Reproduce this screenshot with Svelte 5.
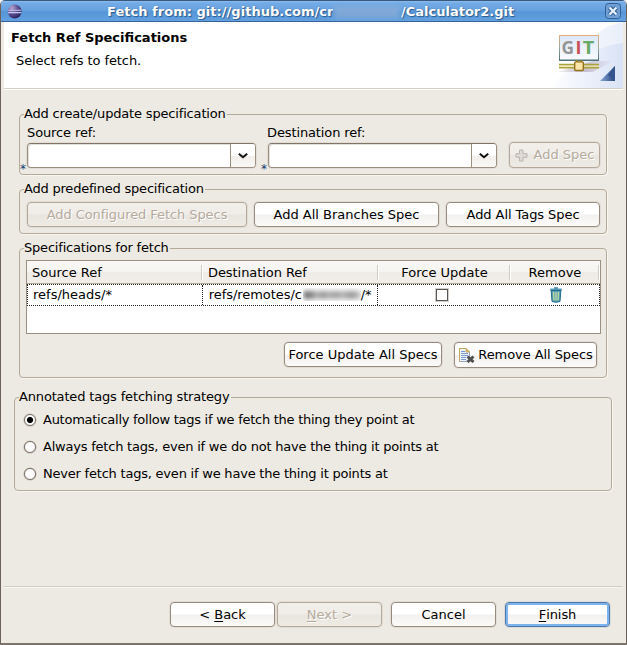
<script>
  let selected = $state(0);
  const strategies = [
    { text: 'Automatically follow tags if we fetch the thing they point at', spacing: -0.26 },
    { text: 'Always fetch tags, even if we do not have the thing it points at', spacing: -0.215 },
    { text: 'Never fetch tags, even if we have the thing it points at', spacing: -0.214 }
  ];
</script>

{#snippet combo(label)}
  <div class="field">
    <div class="label">{label}</div>
    <div class="combo">
      <span class="star">*</span>
      <div class="entry"></div>
      <div class="arrow">
        <svg width="10" height="6" viewBox="0 0 10 6"><path d="M.8 .8 L5 4.3 L9.2 .8" fill="none" stroke="#111" stroke-width="2" /></svg>
      </div>
    </div>
  </div>
{/snippet}

<div class="window">
  <div class="titlebar">
    <svg class="logo" width="15" height="15" viewBox="0 0 15 15">
      <defs>
        <radialGradient id="orb" cx=".3" cy=".25" r=".85">
          <stop offset="0" stop-color="#b9a6cf" /><stop offset=".45" stop-color="#66559b" /><stop offset="1" stop-color="#211b55" />
        </radialGradient>
      </defs>
      <circle cx="7.7" cy="7.5" r="6.9" fill="url(#orb)" />
      <path d="M1.2 6.2H14.2M1 8.6H14.4" stroke="#c3c9ef" stroke-width="1.1" />
    </svg>
    <div class="title"><span class="t1">Fetch from: git://github.com/cr</span><span class="smudge"></span><span>/Calculator2.git</span></div>
    <div class="close">
      <svg width="16" height="16" viewBox="0 0 16 16">
        <rect x=".5" y=".5" width="15" height="15" rx="3" fill="#6f9fd4" stroke="#315f94" />
        <path d="M4.5 4.5L11.5 11.5M11.5 4.5L4.5 11.5" stroke="#2f5f96" stroke-width="4.4" />
        <path d="M4.5 4.5L11.5 11.5M11.5 4.5L4.5 11.5" stroke="#e8f1fb" stroke-width="2.3" />
      </svg>
    </div>
  </div>

  <div class="header">
    <div class="heads">
      <div class="h1">Fetch Ref Specifications</div>
      <div class="h2">Select refs to fetch.</div>
    </div>
    <svg class="banner" width="75" height="66" viewBox="0 0 75 66">
      <defs>
        <linearGradient id="sky" x1="0" x2="1"><stop offset="0" stop-color="#fff" /><stop offset="1" stop-color="#d9e2f6" /></linearGradient>
        <linearGradient id="sky2" x1="0" x2="1"><stop offset="0" stop-color="#fff" /><stop offset="1" stop-color="#e9effa" /></linearGradient>
        <linearGradient id="frame" x2="0" y2="1"><stop offset="0" stop-color="#e4ae82" /><stop offset=".5" stop-color="#99a7a1" /><stop offset="1" stop-color="#4f7377" /></linearGradient>
        <linearGradient id="screen" x2="0" y2="1"><stop offset="0" stop-color="#dce8f6" /><stop offset="1" stop-color="#fafcfe" /></linearGradient>
        <linearGradient id="tri"><stop offset="0" stop-color="#85a8d8" /><stop offset="1" stop-color="#27457f" /></linearGradient>
        <linearGradient id="shade"><stop offset="0" stop-color="#b6a9bd" stop-opacity=".2" /><stop offset=".5" stop-color="#ad9db5" stop-opacity=".6" /><stop offset="1" stop-color="#b6a9bd" stop-opacity="0" /></linearGradient>
      </defs>
      <path d="M35 28 Q48 5 75 0 V66 H0 Q28 55 35 28Z" fill="url(#sky2)" />
      <path d="M2 66 Q36 25 75 21 V66Z" fill="url(#sky)" />
      <path d="M9 50 L45 39 L66 39 Q55 44 45 50Z" fill="url(#shade)" />
      <rect x="11.5" y="13.5" width="39" height="25" fill="url(#screen)" stroke="url(#frame)" />
      <path d="M11 38.2H51" stroke="#4f7377" stroke-width="1.5" />
      <text x="13.5" y="32.3" font-size="17" textLength="12.5" lengthAdjust="spacingAndGlyphs" fill="#949494">G</text>
      <text x="27.5" y="32.3" font-size="17" textLength="6" lengthAdjust="spacingAndGlyphs" fill="#c94f59">I</text>
      <text x="34.8" y="32.3" font-size="17" textLength="11.5" lengthAdjust="spacingAndGlyphs" fill="#67a965">T</text>
      <path d="M11 42.7H51M11 45.7H51" stroke="#aaa13b" stroke-width="1.8" />
      <path d="M11 44.2H51" stroke="#f2edb4" stroke-width="1" />
      <path d="M29.2 38V40M32.8 38V40" stroke="#9a8122" stroke-width="1.5" />
      <rect x="26.7" y="39.9" width="8.6" height="8.6" rx="1" fill="#fbe6a9" stroke="#94701a" stroke-width="1.4" />
      <path d="M67 44V59H52Z" fill="url(#tri)" />
      <path d="M67 44V59L60 53Z" fill="#34548d" />
    </svg>
  </div>

  <div class="body">
    <fieldset class="g1">
      <legend style:letter-spacing="-0.17px">Add create/update specification</legend>
      <div class="row specrow">
        {@render combo('Source ref:')}
        {@render combo('Destination ref:')}
        <div class="btn off addspec">
          <svg width="13" height="13" viewBox="0 0 13 13"><path d="M4.5 1H8V4.7H12V8.2H8V12H4.5V8.2H1V4.7H4.5Z" fill="#dedbd5" stroke="#b9b5ad" /></svg>
          <span>Add Spec</span>
        </div>
      </div>
    </fieldset>

    <fieldset class="g2">
      <legend style:letter-spacing="-0.21px">Add predefined specification</legend>
      <div class="row prerow">
        <div class="btn off tight" style:width="220px">Add Configured Fetch Specs</div>
        <div class="btn" style:width="185px">Add All Branches Spec</div>
        <div class="btn tight" style:width="154px">Add All Tags Spec</div>
      </div>
    </fieldset>

    <fieldset class="g3">
      <legend style:letter-spacing="-0.2px">Specifications for fetch</legend>
      <div class="table">
        <div class="thead">
          <div class="c1">Source Ref</div>
          <div class="c2 tight">Destination Ref</div>
          <div class="c3">Force Update</div>
          <div class="c4">Remove</div>
        </div>
        <div class="trow">
          <div class="c1">refs/heads/*</div>
          <div class="c2"><span class="remote">refs/remotes/c</span><span class="blot"><i></i></span><span>/*</span></div>
          <div class="c3"><span class="check"></span></div>
          <div class="c4">
            <svg width="12" height="16" viewBox="0 0 12 16">
              <path d="M1.2 3.5H10.8L10 14.5Q6 16 2 14.5Z" fill="#5a9fae" stroke="#216a96" />
              <path d="M3.6 5L4 13.4M6 5V13.6M8.4 5L8 13.4" stroke="#c5dda8" stroke-width="1.2" />
              <path d="M.3 2.7H11.7" stroke="#1f6998" stroke-width="2" /><path d="M1 2.4H11" stroke="#65b4bd" stroke-width=".8" />
              <path d="M4 1H8" stroke="#25719a" stroke-width="1.3" />
            </svg>
          </div>
        </div>
      </div>
      <div class="row actions">
        <div class="btn" style:width="158px">Force Update All Specs</div>
        <div class="btn remove">
          <svg width="17" height="16" viewBox="0 0 17 16">
            <path d="M1.5 1.5H8L11.5 5V14.5H1.5Z" fill="#edf3fb" stroke="#9aa5bd" />
            <path d="M1.5 14.5V1.5H8L11.5 5" fill="none" stroke="#c5a95f" /><path d="M8 1.5V5H11.5Z" fill="#e6c878" stroke="#c5a95f" />
            <path d="M3 4.5H7M3 6.5H10M3 8.5H10M3 10.5H8M3 12.5H8" stroke="#7d98cc" />
            <path d="M9.5 9.5L15.5 15M15.5 9.5L9.5 15" stroke="#505050" stroke-width="3" />
          </svg>
          <span class="tight">Remove All Specs</span>
        </div>
      </div>
    </fieldset>

    <fieldset class="g4">
      <legend style:letter-spacing="-0.16px">Annotated tags fetching strategy</legend>
      <div class="radios">
        {#each strategies as item, i}
          <label class="radio" onclick={() => (selected = i)}>
            <span class="dot" class:on={selected === i}></span><span style:letter-spacing="{item.spacing}px">{item.text}</span>
          </label>
        {/each}
      </div>
    </fieldset>
  </div>

  <div class="footer">
    <div class="btn">&lt;&nbsp;<u>B</u>ack</div>
    <div class="btn off"><u>N</u>ext&nbsp;&gt;</div>
    <div class="btn cancel">Cancel</div>
    <div class="btn primary tight"><u>F</u>inish</div>
  </div>
</div>

<style>
  :global(body) { margin: 0; background: #fff; }
  .window {
    box-sizing: border-box; width: 627px; height: 645px; display: flex; flex-direction: column;
    font: 13px/16px "DejaVu Sans", sans-serif; color: #000; background: #edeae3;
    border: 1px solid #6c6259; border-top: 0; border-bottom: 2px solid #7d746a; border-radius: 5px 5px 0 0;
    overflow: hidden; white-space: nowrap; cursor: default;
  }
  .titlebar {
    box-sizing: border-box; height: 22px; flex: none; display: flex; align-items: center; padding: 0 5px 0 6px;
    border-top: 1px solid #38587c; border-bottom: 1px solid #35659c;
    background: linear-gradient(#8bbcf0 0, #73abe6 2px, #68a2df 9px, #5695d7 11px, #62a0df 19px);
    color: #fff; font-weight: bold; text-shadow: 1px 1px 1px #2d5a8c, 0 0 1px #3c6da5;
  }
  .title { flex: 1; display: flex; padding: 1px 0 0 85px; }
  .t1 { width: 226px; overflow: hidden; letter-spacing: .03px; }
  .smudge { width: 66px; height: 12px; margin: 2px 1px 0 1px; background: #8daed6; filter: blur(2.5px); opacity: .75; }
  .close { height: 16px; }
  .header {
    box-sizing: border-box; height: 68px; flex: none; display: flex; justify-content: space-between;
    margin: 0 3px; background: #fff; border-bottom: 1px solid #fff; box-shadow: inset 0 -1px #d6d0c0;
  }
  .heads { padding: 8px 0 0 7px; }
  .h1 { font-weight: bold; }
  .h2 { padding: 7px 0 0 5px; letter-spacing: -.1px; }
  .tight { letter-spacing: -.07px; }
  .banner { display: block; font-family: "Open Sans", "DejaVu Sans", sans-serif; font-weight: bold; }
  .body { flex: 1; display: flex; flex-direction: column; padding: 16px 19px 0 18px; }
  fieldset {
    box-sizing: border-box; margin: 0; padding: 0 6px 0 7px; border: 1px solid #b5aa9a; border-radius: 4px; min-width: 0;
    box-shadow: 1px 1px #f8f6f1;
  }
  legend { height: 16px; margin-left: -3px; padding: 0 1px 0 0; background: #edeae3; line-height: 15px; }
  .g1 { height: 69px; }
  .g2 { height: 53px; margin-top: 6px; }
  .g3 { height: 138px; margin-top: 6px; padding-left: 6px; padding-right: 5px; }
  .g3 legend { margin-left: -2px; }
  .g4 { height: 102px; margin: 11px -5px 0; }
  .row { display: flex; }
  .specrow { align-items: flex-end; padding-top: 3px; }
  .field + .field { margin-left: 12px; }
  .field + .field .label { padding-left: 0; }
  .label { height: 18px; margin-left: -1px; padding-left: 1px; letter-spacing: -.12px; }
  .combo {
    box-sizing: border-box; position: relative; display: flex; width: 229px; height: 25px; background: #fff;
    border: 1px solid #9b8f80; border-top-color: #7f7466; border-radius: 4px; box-shadow: 0 0 0 1px #e2ded6;
  }
  .entry { flex: 1; border-radius: 4px 0 0 4px; box-shadow: inset 1px 1px #e3e0da; }
  .star { position: absolute; left: -8px; top: 17px; font-size: 12px; line-height: 16px; color: #123c70; }
  .arrow {
    display: flex; width: 24px; align-items: center; justify-content: center; border-left: 1px solid #9b8f80;
    border-radius: 0 3px 3px 0; background: linear-gradient(#fff 50%, #f1eeea 51%, #faf8f6);
  }
  .btn {
    box-sizing: border-box; display: flex; align-items: center; justify-content: center; height: 25px;
    border: 1px solid #978b7d; border-radius: 4px; box-shadow: 0 0 0 1px #e2ddd5;
    background: linear-gradient(#fff 0, #fff 48%, #f3f1ee 52%, #fcfbfa);
  }
  .off {
    color: #b5ab9d; border-color: #b3a899; text-shadow: 1px 1px #fff;
    background: linear-gradient(#f2efea 0, #f0ede8 48%, #e9e5df 52%, #eeebe5);
  }
  .addspec { width: 91px; height: 26px; margin-left: 12px; gap: 6px; }
  .prerow { gap: 7px; padding-top: 5px; }
  .table { box-sizing: border-box; height: 74px; margin-top: 4px; border: 1px solid #9b907f; background: #fff; }
  .thead, .trow { display: flex; align-items: center; }
  .thead {
    box-sizing: border-box; height: 23px; border-bottom: 1px solid #b4aa99;
    background: linear-gradient(#f9f8f6 0, #f6f4f1 48%, #efece7 52%, #f1eeea);
  }
  .thead div { box-sizing: border-box; height: 15px; line-height: 15px; border-right: 1px solid #d3cdc1; box-shadow: 1px 0 #fff; }
  .trow { box-sizing: border-box; height: 22px; border: 1px dotted #222; }
  .trow div { box-sizing: border-box; height: 20px; line-height: 19px; }
  .trow .c1, .trow .c2 { border-right: 1px dotted #222; }
  .c1 { width: 175px; padding-left: 5px; }
  .c2 { width: 176px; padding-left: 6px; }
  .trow .c2 { display: flex; padding-left: 6px; }
  .c3 { width: 132px; text-align: center; padding-left: 2px; }
  .c4 { width: 89px; text-align: center; padding-left: 2px; }
  .trow .c3, .trow .c4 { display: flex; justify-content: center; align-items: center; }
  .trow .c3 { padding: 0 4px 0 0; }
  .remote { width: 93px; overflow: hidden; letter-spacing: -.05px; }
  .blot { width: 58px; height: 13px; margin: 3px 0 0 1px; overflow: hidden; }
  .blot i {
    display: block; height: 8px; margin: 3px 0 0 1px; filter: blur(2.4px);
    background: linear-gradient(90deg, #333 0, #888 8%, #777 14%, #b8b8b8 22%, #909090 32%, #b0b0b0 45%, #999 55%, #b5b5b5 68%, #919191 82%, #aaa 92%, #ccc 100%);
  }
  .check { box-sizing: border-box; width: 12px; height: 12px; border: 1px solid #555; background: #fff; box-shadow: 0 0 0 1px #d2cec7; }
  .actions { padding: 8px 4px 0 0; gap: 12px; justify-content: flex-end; }
  .remove { width: 143px; height: 26px; gap: 3px; }
  .radios { display: flex; flex-direction: column; gap: 11px; padding: 7px 0 0 2px; }
  .radio { display: flex; align-items: center; gap: 7px; height: 16px; }
  .dot { box-sizing: border-box; width: 12px; height: 12px; border: 1px solid #786e64; border-radius: 50%; background: #fff; box-shadow: 0 0 0 .6px #c2bab0; }
  .dot.on { background: radial-gradient(circle at 50% 50%, #000 0 2.6px, #fff 3.6px); }
  .footer {
    box-sizing: border-box; display: flex; height: 57px; margin: 0 3px; padding: 15px 13px 0; gap: 2px;
    justify-content: flex-end; border-top: 1px solid #d3cdbd; box-shadow: inset 0 1px #f8f6f2;
  }
  .footer .btn { width: 105px; }
  .footer .cancel { margin: 0 7px; }
  .footer .primary { border-color: #4e78a8; box-shadow: inset 0 0 0 2px #7db3ee, 0 0 0 1px #d9dbdc; }
  u { text-underline-offset: 2px; text-decoration-thickness: 1px; }
</style>
